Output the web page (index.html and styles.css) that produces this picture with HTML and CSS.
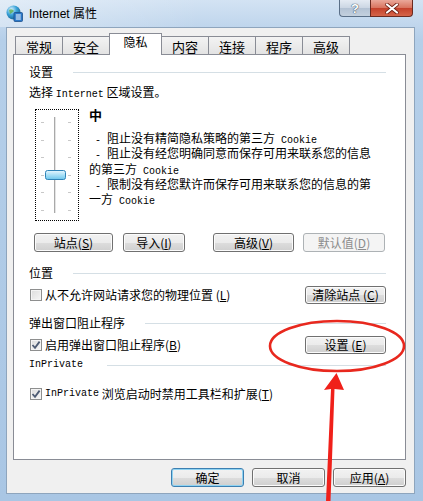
FILE: index.html
```html
<!DOCTYPE html>
<html lang="zh-CN">
<head>
    <meta charset="UTF-8">
    <title>Internet 属性</title>
    <link rel="stylesheet" href="styles.css">
</head>
<body>
    <div class="window">
        <div class="titlebar">
            <svg class="app-icon" width="17" height="17" viewBox="0 0 17 17">
                <defs>
                    <radialGradient id="globe" cx="35%" cy="30%" r="75%">
                        <stop offset="0" stop-color="#dff4ff"/>
                        <stop offset="0.5" stop-color="#3aa3d8"/>
                        <stop offset="1" stop-color="#17608f"/>
                    </radialGradient>
                </defs>
                <circle cx="7.5" cy="7.5" r="7" fill="url(#globe)"/>
                <path d="M3 5 Q6 3 8 6 Q6 8 4 9 Z" fill="#5fae4f" opacity="0.8"/>
                <rect x="8" y="7.5" width="8.5" height="9" rx="1" fill="#2b78c8" stroke="#1c4f8a" stroke-width="0.8"/>
                <path d="M9.8 10h5M9.8 12h5M9.8 14h5" stroke="#fff" stroke-width="1"/>
            </svg>
            <span class="title">Internet 属性</span>
            <div class="caption-buttons">
                <div class="cap-btn help">?</div>
                <div class="cap-btn close">
                    <svg width="14" height="11" viewBox="0 0 14 11">
                        <path d="M2 1.5 L12 9.5 M12 1.5 L2 9.5" stroke="#6b1c10" stroke-width="3.6" stroke-linecap="round"/>
                        <path d="M2 1.5 L12 9.5 M12 1.5 L2 9.5" stroke="#fff" stroke-width="2.2" stroke-linecap="round"/>
                    </svg>
                </div>
            </div>
        </div>

        <div class="client">
            <div class="tabs">
                <div class="tab">常规</div>
                <div class="tab">安全</div>
                <div class="tab active">隐私</div>
                <div class="tab">内容</div>
                <div class="tab">连接</div>
                <div class="tab">程序</div>
                <div class="tab">高级</div>
            </div>

            <div class="panel">
                <div class="group-title">设置</div>
                <p class="hint">选择 <span class="en">Internet</span> 区域设置。</p>

                <div class="privacy">
                    <div class="slider">
                        <svg width="42" height="110" viewBox="0 0 42 110">
                            <g stroke="#c8c8c8" stroke-width="1">
                                <path d="M5 12.5h3M32 12.5h3"/>
                                <path d="M5 30.5h3M32 30.5h3"/>
                                <path d="M5 47.5h3M32 47.5h3"/>
                                <path d="M5 65.5h3M32 65.5h3"/>
                                <path d="M5 82.5h3M32 82.5h3"/>
                                <path d="M5 100.5h3M32 100.5h3"/>
                            </g>
                            <path d="M18.5 7v96" stroke="#a9a9a9" stroke-width="1"/>
                            <path d="M19.5 7v96" stroke="#e4e4e4" stroke-width="1"/>
                            <defs>
                                <linearGradient id="thumb" x1="0" y1="0" x2="0" y2="1">
                                    <stop offset="0" stop-color="#e6f7ff"/>
                                    <stop offset="0.5" stop-color="#a9e0f7"/>
                                    <stop offset="1" stop-color="#6cc6ec"/>
                                </linearGradient>
                            </defs>
                            <rect x="9.5" y="60.5" width="20" height="9" rx="2" fill="url(#thumb)" stroke="#2f84b8"/>
                        </svg>
                    </div>
                    <div class="level">
                        <div class="level-name">中</div>
                        <div class="level-desc">
                            <p><span class="en">&nbsp;-&nbsp;</span>阻止没有精简隐私策略的第三方<span class="en"> Cookie</span></p>
                            <p><span class="en">&nbsp;-&nbsp;</span>阻止没有经您明确同意而保存可用来联系您的信息的第三方<span class="en"> Cookie</span></p>
                            <p><span class="en">&nbsp;-&nbsp;</span>限制没有经您默许而保存可用来联系您的信息的第一方<span class="en"> Cookie</span></p>
                        </div>
                    </div>
                </div>

                <div class="site-buttons">
                    <button class="btn btn-sites">站点(<u>S</u>)</button>
                    <button class="btn btn-import">导入(<u>I</u>)</button>
                    <button class="btn btn-advanced">高级(<u>V</u>)</button>
                    <button class="btn btn-default" disabled>默认值(<u>D</u>)</button>
                </div>

                <div class="group-title location-title">位置</div>
                <div class="option-row">
                    <label class="check"><span class="box"></span>从不允许网站请求您的物理位置 (<u>L</u>)</label>
                    <button class="btn btn-side">清除站点 (<u>C</u>)</button>
                </div>

                <div class="group-title popup-title">弹出窗口阻止程序</div>
                <div class="option-row popup-row">
                    <label class="check"><span class="box checked"><svg width="10" height="10" viewBox="0 0 10 10"><path d="M1.5 5 L4 7.8 L8.6 1.6" fill="none" stroke="#4d5b73" stroke-width="1.8"/></svg></span>启用弹出窗口阻止程序(<u>B</u>)</label>
                    <button class="btn btn-side">设置 (<u>E</u>)</button>
                </div>

                <div class="group-title inprivate-title"><span class="en">InPrivate</span></div>
                <div class="option-row inprivate-row">
                    <label class="check"><span class="box checked"><svg width="10" height="10" viewBox="0 0 10 10"><path d="M1.5 5 L4 7.8 L8.6 1.6" fill="none" stroke="#4d5b73" stroke-width="1.8"/></svg></span><span class="en">InPrivate</span>&nbsp;浏览启动时禁用工具栏和扩展(<u>T</u>)</label>
                </div>
            </div>

            <div class="dialog-buttons">
                <button class="btn default">确定</button>
                <button class="btn">取消</button>
                <button class="btn">应用(<u>A</u>)</button>
            </div>
        </div>

        <!-- red marks drawn over the screenshot -->
        <svg class="annotation" width="423" height="501" viewBox="0 0 423 501">
            <ellipse cx="337" cy="346" rx="67" ry="25" fill="none" stroke="#e8281e" stroke-width="2.6"/>
            <path d="M336.5 373 L344 390 L334.5 389 L330.5 501 L326 501 L331 389 L324 390 Z" fill="#f0201a"/>
        </svg>
    </div>
</body>
</html>
```

FILE: styles.css
```css
* {
    box-sizing: border-box;
}
body {
    margin: 0;
    font-family: "Noto Sans CJK SC", sans-serif;
    font-size: 12px;
    color: #000;
}
p {
    margin: 0;
}
.en {
    font-family: "Liberation Mono", monospace;
    font-size: 10px;
}
.window {
    position: relative;
    width: 423px;
    height: 501px;
    display: flex;
    flex-direction: column;
    padding: 0 8px 7px 6px;
    background: linear-gradient(to bottom, #d3e3f3 0, #b5cfe9 40px, #a9c6e4 100%);
    overflow: hidden;
}
.titlebar {
    flex: 0 0 27px;
    display: flex;
    align-items: flex-start;
    background: linear-gradient(to right, rgba(255,255,255,0.35), rgba(255,255,255,0) 200px);
    margin: 0 -8px 0 -6px;
    padding: 0 10px 0 6px;
}
.app-icon {
    margin-top: 5px;
}
.title {
    margin: 6px 0 0 6px;
    line-height: 16px;
    font-family: "Liberation Sans", "Noto Sans CJK SC", sans-serif;
    font-size: 12px;
}
.caption-buttons {
    margin-left: auto;
    display: flex;
}
.cap-btn {
    height: 17px;
    display: flex;
    align-items: center;
    justify-content: center;
    border: 1px solid #5a6f87;
    border-top: none;
}
.cap-btn.help {
    width: 31px;
    border-radius: 0 0 0 4px;
    border-right: none;
    background: linear-gradient(to bottom, #e4ebf3 0, #cbd6e3 50%, #b3c2d3 51%, #c3d0de 100%);
    color: #fff;
    font-family: "Liberation Sans", sans-serif;
    font-weight: bold;
    font-size: 13px;
    text-shadow: 0 0 1px #2c3e55, 0 0 1px #2c3e55;
}
.cap-btn.close {
    width: 43px;
    border-radius: 0 0 4px 0;
    border-color: #6b2a20;
    background: linear-gradient(to bottom, #eaa89a 0, #d8725d 50%, #c4402a 51%, #d5654a 100%);
}
.client {
    flex: 1;
    display: flex;
    flex-direction: column;
    background: #f0f0f0;
    border: 1px solid #8ea5bd;
    padding: 5px 8px 0 6px;
}
.tabs {
    height: 21px;
    display: flex;
    align-items: flex-end;
    padding-left: 2px;
}
.tab {
    width: 48px;
    height: 18px;
    margin-right: -1px;
    border: 1px solid #898c95;
    border-bottom: none;
    background: linear-gradient(to bottom, #f3f3f3, #e3e3e3);
    text-align: center;
    font-size: 13px;
    line-height: 15px;
    padding-top: 2px;
}
.tab.active {
    position: relative;
    z-index: 1;
    width: 53px;
    height: 22px;
    margin-bottom: -1px;
    background: #fff;
    font-size: 12px;
    line-height: 14px;
    padding-top: 1px;
}
.panel {
    flex: 0 0 406px;
    background: #fff;
    border: 1px solid #898c95;
    padding: 10px 19px 0 15px;
}
.group-title {
    display: flex;
    align-items: center;
    gap: 20px;
    line-height: 14px;
    height: 14px;
}
.group-title::after {
    content: "";
    flex: 1;
    height: 1px;
    background: #d5dfe5;
}
.hint {
    margin-top: 6px;
    line-height: 14px;
}
.privacy {
    display: flex;
    margin-top: 7px;
}
.slider {
    width: 44px;
    height: 112px;
    margin-left: 6px;
    border: 1px dotted #000;
}
.slider svg {
    display: block;
}
.level {
    margin-left: 10px;
    width: 286px;
}
.level-name {
    font-weight: bold;
    font-size: 13px;
    line-height: 12px;
}
.level-desc {
    margin-top: 11px;
    line-height: 12.3px;
}
.site-buttons {
    display: flex;
    margin-top: 12px;
}
.btn {
    height: 19px;
    padding: 0;
    border: 1px solid #707070;
    border-radius: 3px;
    background: linear-gradient(to bottom, #f2f2f2 0, #ebebeb 50%, #dddddd 51%, #cfcfcf 100%);
    box-shadow: inset 0 0 0 1px #fbfbfb;
    font-family: "Noto Sans CJK SC", sans-serif;
    font-size: 12px;
    line-height: 16px;
    color: #000;
}
.btn:disabled {
    border-color: #adb2b5;
    background: #f4f4f4;
    box-shadow: none;
    color: #8d8d8d;
}
.btn.default {
    border-color: #3c7fb1;
    box-shadow: inset 0 0 0 1px #8fd3f2;
}
.btn-sites {
    width: 79px;
    margin-left: 5px;
}
.btn-import {
    width: 62px;
    margin-left: 10px;
}
.btn-advanced {
    width: 81px;
    margin-left: 28px;
}
.btn-default {
    width: 82px;
    margin-left: 9px;
}
.btn-side {
    width: 81px;
    height: 18px;
}
.location-title {
    margin-top: 14px;
}
.option-row {
    display: flex;
    align-items: center;
    justify-content: space-between;
    margin-top: 6px;
    min-height: 18px;
}
.popup-title {
    margin-top: 12px;
}
.inprivate-title {
    margin-top: 4px;
    gap: 24px;
}
.inprivate-row {
    margin-top: 13px;
}
.check {
    display: flex;
    align-items: center;
    margin-left: 1px;
    line-height: 14px;
}
.box {
    width: 12px;
    height: 12px;
    margin-right: 3px;
    border: 1px solid #8e8f8f;
    background: linear-gradient(135deg, #dcdcdc, #f6f6f6);
    box-shadow: inset 0 0 0 1px #f4f4f4;
    display: flex;
    align-items: center;
    justify-content: center;
}
.dialog-buttons {
    display: flex;
    justify-content: flex-end;
    gap: 8px;
    margin-top: 8px;
}
.dialog-buttons .btn {
    width: 73px;
}
.annotation {
    position: absolute;
    left: 0;
    top: 0;
    pointer-events: none;
}
```
